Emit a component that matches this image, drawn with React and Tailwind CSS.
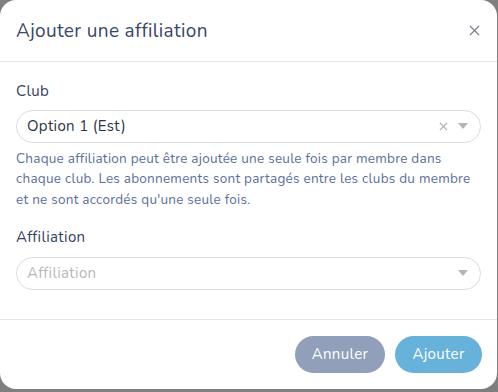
import { X } from 'lucide-react'

function Caret() {
  return (
    <svg width="10" height="6" viewBox="0 0 10 6" className="fill-[#b5b5b5]">
      <path d="M0 0h10L5 6z" />
    </svg>
  )
}

function Select({ value, placeholder, clearable }) {
  return (
    <div className="flex h-[33px] items-center rounded-full border border-[#dcdcdc] bg-white pl-[10px] pr-[12px]">
      <span className={`flex-1 text-[15px] ${value ? 'text-[#2b3445]' : 'text-[#b8b8b8]'}`}>
        {value || placeholder}
      </span>
      {clearable && <X size={13} strokeWidth={2.2} className="mr-[8px] text-[#b5b5b5]" />}
      <Caret />
    </div>
  )
}

export default function App() {
  return (
    <div className="h-[392px] w-[498px] bg-[#7f7f7f] font-['Nunito','Open_Sans',sans-serif] tracking-[0.35px]">
      <div className="flex h-[389px] w-[497px] flex-col rounded-[16px] bg-white">
        {/* Header */}
        <div className="flex h-[62px] items-center justify-between border-b border-[#e3e5ea] pl-[16px] pr-[14px]">
          <h2 className="pt-[1px] text-[19px] text-[#3a4766]">Ajouter une affiliation</h2>
          <X size={17} strokeWidth={1.7} className="text-[#7d8594]" />
        </div>

        {/* Body */}
        <div className="flex h-[258px] flex-col border-b border-[#e3e5ea] px-[16px] pt-[18px]">
          <label className="text-[15px] text-[#344062]">Club</label>
          <div className="mt-[7px]">
            <Select value="Option 1 (Est)" clearable />
          </div>
          <p className="mt-[6px] text-[13.5px] leading-[20.5px] tracking-[0.25px] text-[#5a6e9c]">
            Chaque affiliation peut être ajoutée une seule fois par membre dans chaque club. Les abonnements sont partagés entre les clubs du membre et ne sont accordés qu'une seule fois.
          </p>
          <label className="mt-[16px] text-[15px] text-[#344062]">Affiliation</label>
          <div className="mt-[8px]">
            <Select placeholder="Affiliation" />
          </div>
        </div>

        {/* Footer */}
        <div className="flex flex-1 items-center justify-end gap-[10px] px-[15px]">
          <button className="h-[37px] w-[90px] rounded-full bg-[#919fba] text-[15px] text-white">Annuler</button>
          <button className="h-[37px] w-[87px] rounded-full bg-[#67b2da] text-[15px] text-white">Ajouter</button>
        </div>
      </div>
    </div>
  )
}
